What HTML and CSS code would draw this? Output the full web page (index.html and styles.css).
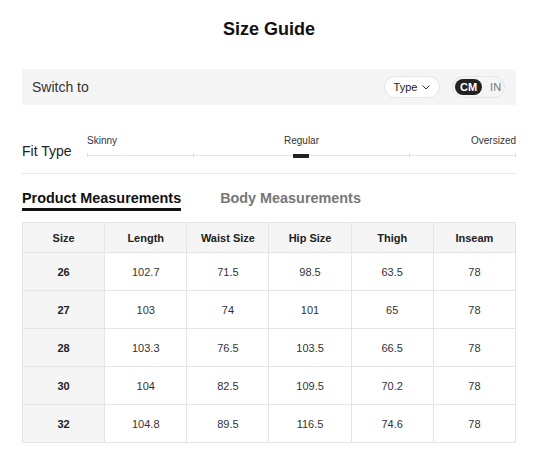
FILE: index.html
```html
<!DOCTYPE html>
<html>
<head>
<meta charset="utf-8">
<link rel="stylesheet" href="styles.css">
</head>
<body>
<div class="page">
  <h1 class="title">Size Guide</h1>
  <div class="switch-bar">
    <span class="switch-label">Switch to</span>
    <div class="switch-controls">
      <div class="type-pill">Type
        <svg class="chev" width="8" height="5" viewBox="0 0 8 5"><path d="M0.5 0.5 L4 4 L7.5 0.5" fill="none" stroke="#333" stroke-width="1"/></svg>
      </div>
      <div class="unit-toggle">
        <span class="unit active">CM</span>
        <span class="unit">IN</span>
      </div>
    </div>
  </div>
  <div class="fit-row">
    <span class="fit-label">Fit Type</span>
    <div class="fit-scale">
      <div class="fit-labels">
        <span class="fl-start">Skinny</span>
        <span class="fl-mid">Regular</span>
        <span class="fl-end">Oversized</span>
      </div>
      <div class="fit-track">
        <span class="tick t0"></span>
        <span class="tick t1"></span>
        <span class="tick t2"></span>
        <span class="tick t3"></span>
        <span class="marker"></span>
      </div>
    </div>
  </div>
  <div class="tabs">
    <span class="tab active">Product Measurements</span>
    <span class="tab">Body Measurements</span>
  </div>
  <table class="sizes">
    <thead>
      <tr><th>Size</th><th>Length</th><th>Waist Size</th><th>Hip Size</th><th>Thigh</th><th>Inseam</th></tr>
    </thead>
    <tbody>
      <tr><th>26</th><td>102.7</td><td>71.5</td><td>98.5</td><td>63.5</td><td>78</td></tr>
      <tr><th>27</th><td>103</td><td>74</td><td>101</td><td>65</td><td>78</td></tr>
      <tr><th>28</th><td>103.3</td><td>76.5</td><td>103.5</td><td>66.5</td><td>78</td></tr>
      <tr><th>30</th><td>104</td><td>82.5</td><td>109.5</td><td>70.2</td><td>78</td></tr>
      <tr><th>32</th><td>104.8</td><td>89.5</td><td>116.5</td><td>74.6</td><td>78</td></tr>
    </tbody>
  </table>
</div>
</body>
</html>
```

FILE: styles.css
```css
* { box-sizing: border-box; }
html, body { margin: 0; padding: 0; background: #fff; }
body {
  font-family: "Liberation Sans", Arial, sans-serif;
  color: #222;
}
.page {
  padding: 0 24px 0 22px;
}
.title {
  margin: 0;
  padding-top: 18px;
  height: 69px;
  text-align: center;
  font-size: 18px;
  font-weight: bold;
  color: #111;
  line-height: 22px;
}
.switch-bar {
  height: 36px;
  background: #f5f5f5;
  display: flex;
  align-items: center;
  justify-content: space-between;
  padding: 0 11px 0 10px;
}
.switch-label {
  font-size: 14px;
  color: #333;
}
.switch-controls {
  display: flex;
  align-items: center;
  gap: 12px;
}
.type-pill {
  height: 22px;
  width: 56px;
  border: 1px solid #e6e6e6;
  border-radius: 11px;
  background: #fff;
  font-size: 11px;
  color: #222;
  display: flex;
  align-items: center;
  justify-content: center;
  gap: 5px;
}
.unit-toggle {
  height: 22px;
  width: 53px;
  border: 1px solid #e6e6e6;
  border-radius: 11px;
  background: #f5f5f5;
  display: flex;
  align-items: center;
  padding: 0 2px;
  gap: 3px;
}
.unit {
  font-size: 11px;
  color: #777;
  height: 16px;
  line-height: 16px;
  padding: 0 5px;
  border-radius: 8px;
}
.unit.active {
  background: #222;
  color: #fff;
  font-weight: bold;
}
.fit-row {
  display: flex;
  align-items: flex-start;
  margin-top: 27px;
  height: 42px;
  border-bottom: 1px solid #e8e8e8;
}
.fit-label {
  font-size: 14px;
  color: #222;
  margin-top: 11px;
  width: 65px;
}
.fit-scale {
  flex: 1;
}
.fit-labels {
  display: grid;
  grid-template-columns: 1fr auto 1fr;
  font-size: 10px;
  color: #333;
  line-height: 12px;
  margin-top: 3px;
}
.fl-start { justify-self: start; }
.fl-mid { justify-self: center; }
.fl-end { justify-self: end; }
.fit-track {
  position: relative;
  height: 2px;
  margin-top: 8px;
  border-top: 1px solid #e5e5e5;
}
.tick {
  position: absolute;
  top: -3px;
  width: 1px;
  height: 4px;
  background: #ddd;
}
.t0 { left: 0; }
.t1 { left: 24.7%; }
.t2 { left: 75%; }
.t3 { right: 0; }
.marker {
  position: absolute;
  left: 206px;
  top: -2px;
  width: 16px;
  height: 4px;
  background: #222;
}
.tabs {
  display: flex;
  gap: 39px;
  margin-top: 15px;
  height: 33px;
}
.tab {
  font-size: 14.4px;
  font-weight: bold;
  color: #777;
  line-height: 18px;
  height: 20px;
}
.tab.active {
  color: #111;
  border-bottom: 3px solid #111;
  height: 22px;
}
.sizes {
  width: 100%;
  border-collapse: collapse;
  table-layout: fixed;
  font-size: 11px;
  text-align: center;
}
.sizes th, .sizes td {
  border: 1px solid #e5e5e5;
  padding: 0;
}
.sizes thead th {
  height: 30px;
  background: #f5f5f5;
  font-weight: bold;
  color: #222;
}
.sizes tbody th {
  background: #f5f5f5;
  font-weight: bold;
  color: #222;
}
.sizes tbody th, .sizes tbody td {
  height: 38px;
}
.sizes td {
  color: #333;
}
```
